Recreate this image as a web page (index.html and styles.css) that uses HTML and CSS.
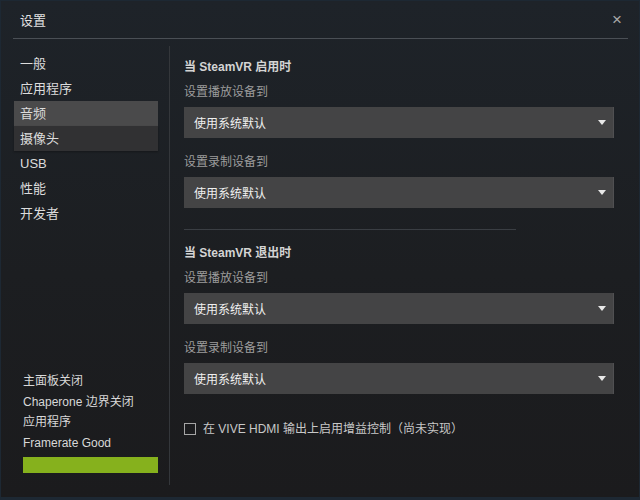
FILE: index.html
```html
<!DOCTYPE html>
<html lang="zh-CN">
<head>
    <meta charset="UTF-8">
    <title>设置</title>
    <link rel="stylesheet" href="styles.css">
</head>
<body>
    <div id="janela">
        <header class="titulo">
            <span>设置</span>
            <span class="fechar">×</span>
        </header>
        <div class="corpo">
            <aside class="lateral">
                <nav class="menu">
                    <div class="item">一般</div>
                    <div class="item">应用程序</div>
                    <div class="item ativo">音频</div>
                    <div class="item hover">摄像头</div>
                    <div class="item">USB</div>
                    <div class="item">性能</div>
                    <div class="item">开发者</div>
                </nav>
                <div class="estado">
                    <p>主面板关闭</p>
                    <p>Chaperone 边界关闭</p>
                    <p>应用程序</p>
                    <p>Framerate Good</p>
                    <div class="barra"></div>
                </div>
            </aside>
            <main class="conteudo">
                <h2>当 SteamVR 启用时</h2>
                <p class="rotulo">设置播放设备到</p>
                <div class="caixa">使用系统默认<span class="seta"></span></div>
                <p class="rotulo">设置录制设备到</p>
                <div class="caixa">使用系统默认<span class="seta"></span></div>

                <hr>

                <h2>当 SteamVR 退出时</h2>
                <p class="rotulo">设置播放设备到</p>
                <div class="caixa">使用系统默认<span class="seta"></span></div>
                <p class="rotulo">设置录制设备到</p>
                <div class="caixa">使用系统默认<span class="seta"></span></div>

                <label class="marcar"><span class="quadrado"></span>在 VIVE HDMI 输出上启用增益控制（尚未实现）</label>
            </main>
        </div>
    </div>
</body>
</html>
```

FILE: styles.css
```css
*{
    margin: 0;
    box-sizing: border-box;
}
:root{
    --texto:#d6d6d6;
    --cinza:#9c9c9c;
    --caixa:#444445;
    --linha:#3a3e43;
}
html, body{
    width: 640px;
    height: 500px;
    background-color: #1b1c1e;
    font-family: "Liberation Sans", "Noto Sans CJK SC", sans-serif;
    font-size: 13px;
    color: var(--texto);
    overflow: hidden;
}
#janela{
    height: 500px;
    display: flex;
    flex-direction: column;
    padding: 0 11px 12px 12px;
    border: 1px solid #1d2833;
    border-bottom-width: 3px;
    background: linear-gradient(#1e2329, #1c1e21 55%, #1b1b1d);
}
.titulo{
    height: 38px;
    flex: none;
    display: flex;
    align-items: center;
    justify-content: space-between;
    padding: 0 6px 0 7px;
    border-bottom: 1px solid #4a4f55;
    color: #e2e2e2;
}
.fechar{
    font-size: 17px;
    font-weight: 300;
    color: #a8a8a8;
}
.corpo{
    flex: 1;
    display: flex;
    margin-top: 7px;
}
.lateral{
    width: 157px;
    display: flex;
    flex-direction: column;
    justify-content: space-between;
    border-right: 1px solid #34373b;
    padding: 5px 11px 12px 1px;
}
.item{
    height: 25px;
    line-height: 25px;
    padding-left: 6px;
    color: #dcdcdc;
}
.ativo{
    background-color: #4a4a4b;
}
.hover{
    background-color: #313133;
    box-shadow: 0 1px 2px rgba(0, 0, 0, 0.3);
}
.estado{
    padding-left: 9px;
    font-size: 12px;
}
.estado p{
    line-height: 20.5px;
    color: #d8d8d8;
}
.barra{
    margin-top: 4px;
    height: 16px;
    background-color: #86b11d;
}
.conteudo{
    flex: 1;
    padding: 13px 14px 0 14px;
    font-size: 12px;
}
h2{
    font-size: 12px;
    line-height: 16px;
    font-weight: bold;
    color: #d4d4d4;
    margin-bottom: 9px;
}
.rotulo{
    line-height: 16px;
    color: var(--cinza);
    margin-bottom: 7px;
}
.caixa{
    height: 31px;
    display: flex;
    align-items: center;
    justify-content: space-between;
    padding: 0 8px 0 10px;
    background-color: var(--caixa);
    color: #f0f0f0;
    margin-bottom: 16px;
    box-shadow: inset -1px 0 0 #505052;
}
.seta{
    width: 0;
    height: 0;
    border-left: 4px solid transparent;
    border-right: 4px solid transparent;
    border-top: 5px solid #e8e8e8;
}
hr{
    border: none;
    border-top: 1px solid var(--linha);
    width: 332px;
    margin: 21px 0 15px 0;
}
.marcar{
    display: flex;
    align-items: center;
    gap: 7px;
    margin-top: 27px;
    line-height: 16px;
    color: #c8c8c8;
}
.quadrado{
    width: 12px;
    height: 12px;
    border: 1px solid #a6a6a6;
}
```
